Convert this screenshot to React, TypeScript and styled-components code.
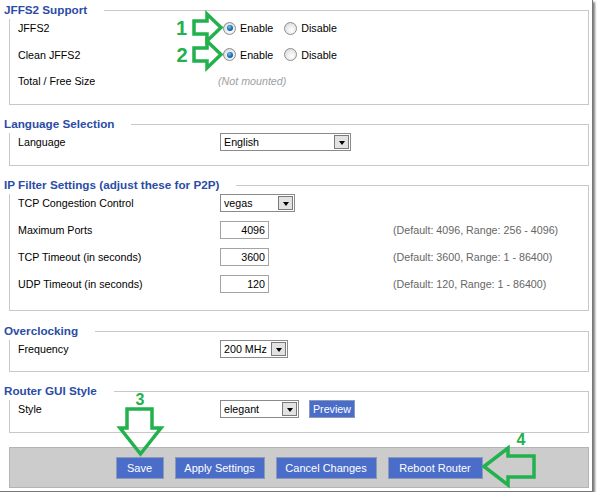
import React from "react";
import styled, { createGlobalStyle } from "styled-components";

const Global = createGlobalStyle`
  html, body { margin: 0; padding: 0; background: #fff; }
  body { font-family: "Liberation Sans", Arial, sans-serif; }
`;

const Page = styled.div`
  position: relative;
  width: 593px;
  height: 492px;
  box-sizing: border-box;
  padding-top: 10px;
  border-right: 1px solid #777;
  border-bottom: 1px solid #777;
  box-shadow: 2px 2px 2px rgba(0, 0, 0, 0.5);
  background: #fff;
`;

const Section = styled.div<{ $mt: number; $pb: number }>`
  margin: ${(p) => p.$mt}px 0 0 9px;
  width: 580px;
  box-sizing: border-box;
  border: 1px solid #c8c8c8;
  padding: 0 8px ${(p) => p.$pb}px 8px;
`;

const Legend = styled.div`
  width: fit-content;
  margin: -10px 0 0 -14px;
  padding: 3px 17px 3px 0;
  background: #fff;
  font: bold 11.7px/12px "Liberation Sans", Arial, sans-serif;
  color: #2b4ca6;
  white-space: nowrap;
`;

const FormGrid = styled.div<{ $gap: number }>`
  display: grid;
  grid-template-columns: 202px 173px 1fr;
  grid-auto-rows: 18px;
  row-gap: ${(p) => p.$gap}px;
  align-items: center;
`;

const Label = styled.div`
  grid-column: 1;
  font-size: 10.7px;
  line-height: 18px;
  color: #000;
  white-space: nowrap;
`;

const Control = styled.div`
  grid-column: 2;
  display: flex;
  align-items: center;
  height: 18px;
`;

const Hint = styled.div`
  grid-column: 3;
  font-size: 10.7px;
  line-height: 18px;
  color: #666;
  white-space: nowrap;
`;

const Muted = styled.span`
  font-size: 10.7px;
  font-style: italic;
  color: #a0a0a0;
  margin-left: -2px;
`;

const RadioDot = styled.span<{ $on?: boolean }>`
  position: relative;
  width: 11px;
  height: 11px;
  border-radius: 50%;
  border: 1px solid #8d8d8d;
  background: radial-gradient(circle at 60% 65%, #ffffff 0%, #e6e6e6 60%, #c9c9c9 100%);
  margin: 0 4px 0 3px;
  flex: none;
  &::after {
    content: "";
    display: ${(p) => (p.$on ? "block" : "none")};
    position: absolute;
    left: 2.5px;
    top: 2.5px;
    width: 6px;
    height: 6px;
    border-radius: 50%;
    background: radial-gradient(circle at 40% 35%, #7fc4f0 0%, #1f78c0 45%, #0b3f7a 100%);
  }
`;

const RadioText = styled.span`
  font-size: 10.7px;
  color: #000;
  margin-right: 8px;
`;

const SelectBox = styled.div<{ $w: number }>`
  display: flex;
  align-items: center;
  width: ${(p) => p.$w}px;
  height: 18px;
  box-sizing: border-box;
  border: 1px solid #8a8a8a;
  background: #fff;
  padding-left: 3px;
  font-size: 10.7px;
  color: #000;
`;

const DropBtn = styled.span`
  margin-left: auto;
  margin-right: 1px;
  width: 15px;
  height: 14px;
  box-sizing: border-box;
  border: 1px solid #7a7a7a;
  background: #e2e2e2;
  display: flex;
  align-items: center;
  justify-content: center;
  &::after {
    content: "";
    border-left: 3.5px solid transparent;
    border-right: 3.5px solid transparent;
    border-top: 4px solid #000;
    margin-top: 2px;
  }
`;

const NumInput = styled.input`
  width: 49px;
  height: 18px;
  box-sizing: border-box;
  border: 1px solid #a3a3a3;
  padding: 0 3px 0 0;
  margin: 0;
  text-align: right;
  font: 10.7px "Liberation Sans", Arial, sans-serif;
  color: #000;
  background: #fff;
  outline: none;
`;

const BlueButton = styled.button<{ $h: number; $w: number }>`
  width: ${(p) => p.$w}px;
  height: ${(p) => p.$h}px;
  box-sizing: border-box;
  padding: 0;
  border: 1px solid #8e99b8;
  background: #4b6dca;
  color: #fff;
  font: 11px "Liberation Sans", Arial, sans-serif;
  cursor: pointer;
`;

const PreviewButton = styled(BlueButton)`
  margin-left: 10px;
  font-size: 10.7px;
`;

const ButtonBar = styled.div`
  margin: 14px 0 0 9px;
  width: 580px;
  height: 41px;
  box-sizing: border-box;
  border: 1px solid #b4b4b4;
  background: #cccccc;
  display: flex;
  align-items: center;
  justify-content: center;
  gap: 11px;
`;

const Overlay = styled.svg`
  position: absolute;
  left: 0;
  top: 0;
  width: 597px;
  height: 495px;
  pointer-events: none;
  overflow: visible;
`;

const Select = ({ value, w }: { value: string; w: number }) => (
  <SelectBox $w={w}>
    {value}
    <DropBtn />
  </SelectBox>
);

const RadioPair = ({ on }: { on: "enable" | "disable" }) => (
  <>
    <RadioDot $on={on === "enable"} />
    <RadioText>Enable</RadioText>
    <RadioDot $on={on === "disable"} />
    <RadioText>Disable</RadioText>
  </>
);

const green = "#22b14c";

const actions: [string, number][] = [
  ["Save", 48],
  ["Apply Settings", 90],
  ["Cancel Changes", 101],
  ["Reboot Router", 95],
];

export default function App() {
  return (
    <>
      <Global />
      <Page>
        <Section $mt={0} $pb={14}>
          <Legend>JFFS2 Support</Legend>
          <FormGrid $gap={8.5}>
            <Label>JFFS2</Label>
            <Control>
              <RadioPair on="enable" />
            </Control>
            <Label>Clean JFFS2</Label>
            <Control>
              <RadioPair on="enable" />
            </Control>
            <Label>Total / Free Size</Label>
            <Control>
              <Muted>(Not mounted)</Muted>
            </Control>
          </FormGrid>
        </Section>

        <Section $mt={19} $pb={14}>
          <Legend>Language Selection</Legend>
          <FormGrid $gap={9}>
            <Label>Language</Label>
            <Control>
              <Select value="English" w={131} />
            </Control>
          </FormGrid>
        </Section>

        <Section $mt={19} $pb={17}>
          <Legend>IP Filter Settings (adjust these for P2P)</Legend>
          <FormGrid $gap={9}>
            <Label>TCP Congestion Control</Label>
            <Control>
              <Select value="vegas" w={75} />
            </Control>
            <Label>Maximum Ports</Label>
            <Control>
              <NumInput readOnly value="4096" />
            </Control>
            <Hint>(Default: 4096, Range: 256 - 4096)</Hint>
            <Label>TCP Timeout (in seconds)</Label>
            <Control>
              <NumInput readOnly value="3600" />
            </Control>
            <Hint>(Default: 3600, Range: 1 - 86400)</Hint>
            <Label>UDP Timeout (in seconds)</Label>
            <Control>
              <NumInput readOnly value="120" />
            </Control>
            <Hint>(Default: 120, Range: 1 - 86400)</Hint>
          </FormGrid>
        </Section>

        <Section $mt={20} $pb={13}>
          <Legend>Overclocking</Legend>
          <FormGrid $gap={9}>
            <Label>Frequency</Label>
            <Control>
              <Select value="200 MHz" w={68} />
            </Control>
          </FormGrid>
        </Section>

        <Section $mt={19} $pb={14}>
          <Legend>Router GUI Style</Legend>
          <FormGrid $gap={9}>
            <Label>Style</Label>
            <Control>
              <Select value="elegant" w={79} />
              <PreviewButton $h={18} $w={46}>Preview</PreviewButton>
            </Control>
          </FormGrid>
        </Section>

        <ButtonBar>
          {actions.map(([label, w]) => (
            <BlueButton key={label} $h={22} $w={w}>
              {label}
            </BlueButton>
          ))}
        </ButtonBar>

        <Overlay viewBox="0 0 597 495">
          <g fill="none" stroke={green} strokeWidth={3.5} strokeLinejoin="miter">
            <polygon points="194,21 207,21 207,14 221,27.5 207,41 207,34 194,34" />
            <polygon points="194,48 207,48 207,41 221,54.5 207,68 207,61 194,61" />
            <polygon points="127,409 152,409 152,428 161,428 140.5,454 120,428 127,428" />
            <polygon points="484,466.5 508,448 508,456 534,456 534,477 508,477 508,485" />
          </g>
          <g fill={green} fontFamily="Liberation Sans, Arial, sans-serif" fontWeight="bold" textAnchor="middle">
            <text x={181.5} y={35} fontSize={20}>1</text>
            <text x={182} y={62} fontSize={20}>2</text>
            <text x={140} y={405} fontSize={16}>3</text>
            <text x={521} y={445} fontSize={16}>4</text>
          </g>
        </Overlay>
      </Page>
    </>
  );
}
